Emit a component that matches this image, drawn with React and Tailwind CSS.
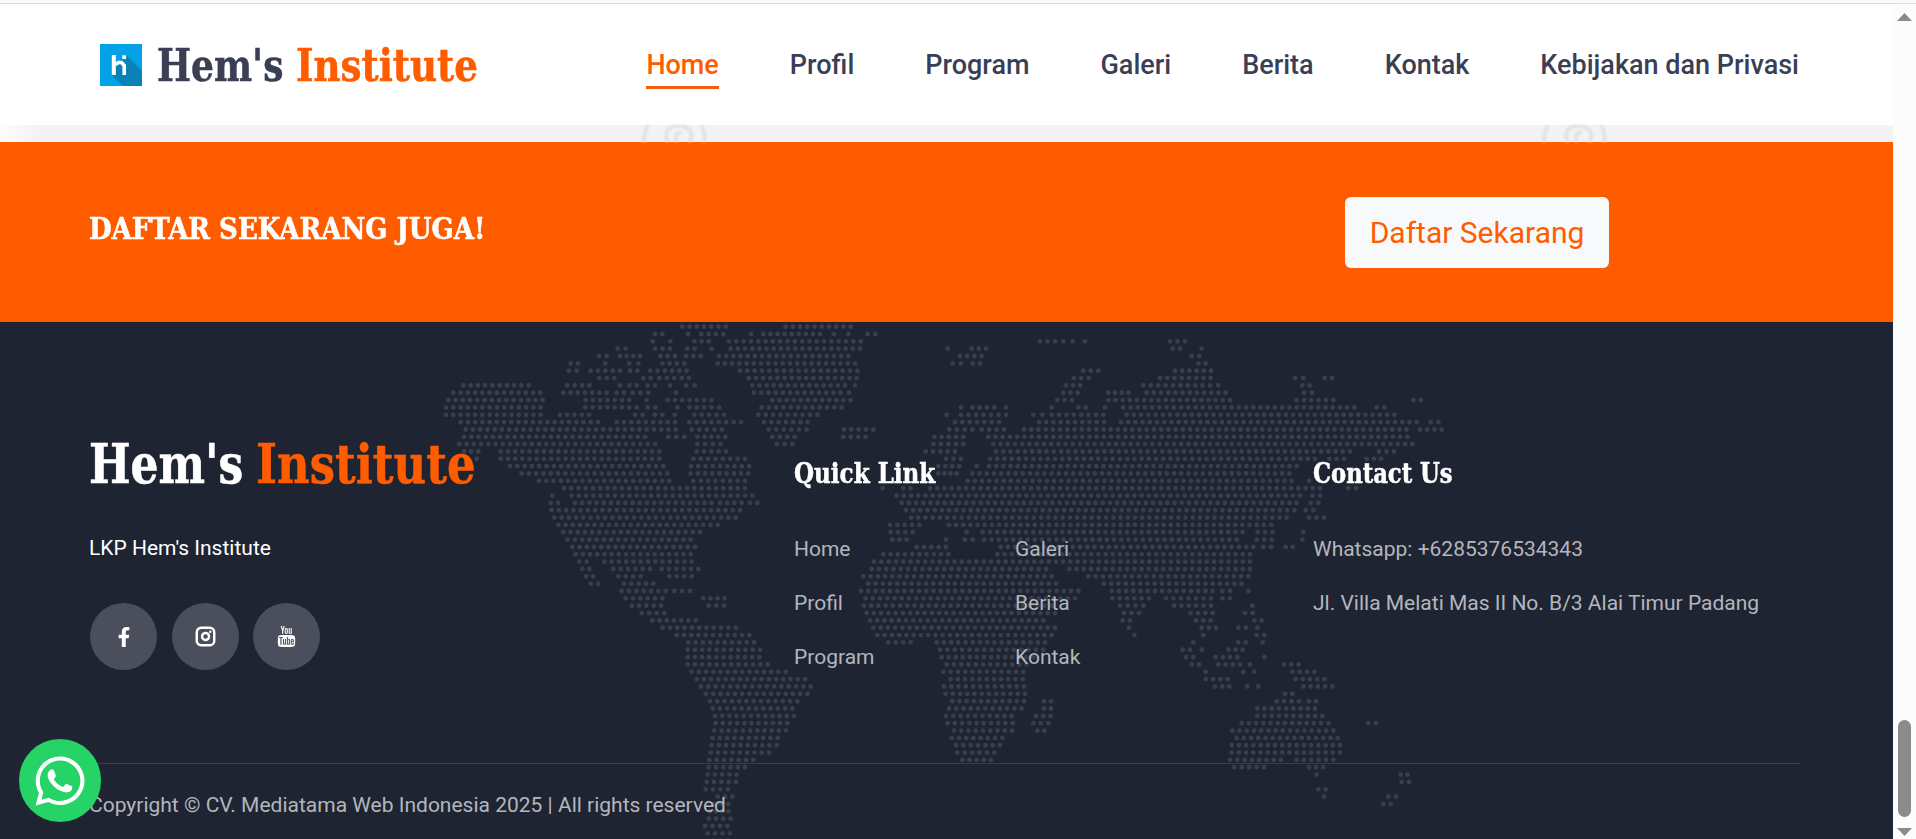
import React from "react";
import { FaWhatsapp, FaFacebookF } from "react-icons/fa";
import { TfiYoutube } from "react-icons/tfi";
import { FiInstagram } from "react-icons/fi";

// Dotted world map: one string per row, "start-end" runs of dots.
const MAP_ROWS = [
  "787-917 1097-1292",
  "705-727 804 844-910 993 1030-1200 1242 1285 1343-1366",
  "698 751 823-866 927-1322 1860-1905 1930-1958 1995 2250-2295",
  "593-617 705-750 802-824 875 932-1320 1583 1655-1698 2258-2280 2345",
  "537-560 600-660 721-765 798-842 897-1285 1620-1685 2315-2338",
  "452-474 556 628-655 727-793 893-1305 1598-1623 1658-1680 2335-2357",
  "447-470 512-600 630-652 691-800 960-1312 1990-2035 2265-2373",
  "538-583 670-692 718-807 986-1310 1962-2006 2220-2372 2625-2650 2714-2736",
  "130-326 442-508 600 628-650 683-705 750 798-824 997-1275 1305 1938-1980 2170-2370 2395 2647-2669",
  "100-361 430-560 590-612 638-685 768 1002-1262 1287 1930-1973 2065-2125 2180-2417 2652-2676",
  "85-368 497-628 680 743-874 1057-1292 1912-1956 2065-2430 2630-2740 2980-3003",
  "78-362 496-650 683-706 772 808-897 1025-1265 1623 1657-1723 1758 1895 1975-1997 2055 2110-2803 2870-2893",
  "78-362 420-507 645-668 705-727 764 823-912 1015-1192 1580 1623-1758 1840-1867 1895-2050 2120-2923",
  "122-534 590-765 808-963 1032-1163 1605-1737 1857-2052 2103-2990 3032-3055",
  "137-767 815-906 1046-1160 1272-1360 1588-1657 1685-1752 1812-2960 3000-3065",
  "132-675 745-793 832-916 1057-1124 1270-1337 1543-1630 1705-2962",
  "118-705 832-902 1070-1117 1540-1630 1720-2847 2868-2977",
  "132-175 242-718 830-918 1517-1605 1728-2790 2877-2922",
  "170 242-718 820-975 1578-1623 1710-2685 2728-2772 2840-2883",
  "270-730 813-987 1555-1618 1670 1707-2630",
  "305-742 812-985 1555-1610 1657-2608",
  "357-748 820-975 1643-2615 2667",
  "432-975 1388 1450-1472 1530-2700 2785-2808",
  "397 455-997 1430-2640 2677-2700",
  "392-414 465-875 900-965 990-1012 1445-2630 2672-2695",
  "395-960 1458-2623 2657-2680",
  "403-947 1473-2600 2667-2712",
  "415-893 1410-1498 1587-2553",
  "430-840 1412-1478 1640 1688-2468 2513-2557 2650",
  "443-812 1417-1460 1578 1635-1658 1693-2450 2510-2555 2647",
  "457-825 1490-1578 1742-2500 2530-2553 2597-2618",
  "467-812 1390-1585 1732-2490",
  "478-500 553-815 1362-1735 1757-2490",
  "487-508 580-690 725-835 1355-1878 1948-2490",
  "498-520 595-662 748-815 1330-1895 2005-2485",
  "512-535 612-700 1345-1908 2052-2465",
  "605-737 763-810 1323-1975 2075-2378 2407-2430 2485",
  "617-727 850-914 1337-1965 2077-2187 2238-2373 2407-2430",
  "635-723 866-912 1332-1895 2100-2170 2262-2373 2497",
  "665-733 1340-1905 2112-2157 2312-2378 2475-2498",
  "697-827 1350-1870 2108-2130 2328-2372 2503-2525",
  "728-947 1360-1905 2127 2345-2388 2455-2478 2512",
  "770-988 1372-1895 2143 2350 2510-2533",
  "805-1002 1405-1472 1550-1875 2320 2455-2477 2528",
  "803-1020 1560-1870 2288-2310 2345 2425-2468",
  "803-1018 1565-1840 2298-2320 2387-2452 2533",
  "803-1043 1580-1820 2315-2337 2395-2460 2490 2592-2636",
  "815-1097 1570-1810 2357 2470 2503 2617-2683",
  "830-1155 1592-1808 2357-2423 2627-2713",
  "843-1172 1572-1812 2385-2428 2482 2515 2650-2737",
  "858-1162 1577-1815 2595-2617",
  "870-1132 1597-1812 1872-1893 2570-2637 2667-2688",
  "878-1117 1587-1805 1872-1893 2512-2685",
  "885-1122 1578-1775 1848-1892 2512-2707",
  "887-1102 1583-1778 1840-1885 2465-2725 2845-2868",
  "883-1098 1602-1776 1852-1873 2437-2740",
  "878-1073 1595-1747 2450-2753",
  "875-1070 1608-1740 2435-2760",
  "872-1047 1612-1723 2435-2760",
  "868-1000 1627-1713 2430-2583 2630-2740",
  "866-975 2443-2532 2667-2710",
  "863-950 2690 2942-2963",
  "860-948 2945-2967",
  "857-923 2695-2717",
  "893-937 2712 2905-2928",
  "880-925 2890-2912",
  "870-925",
  "866-932",
  "855-922",
  "863-930",
  "880-925",
];

const MAP_PATH = MAP_ROWS.map((row, r) =>
  row
    .split(" ")
    .map((run) => {
      const [a, b = a] = run.split("-").map(Number);
      const n = Math.round((b - a) / 21.7);
      const step = n ? (b - a) / n : 0;
      let d = "";
      for (let i = 0; i <= n; i++) d += `M${(a + i * step).toFixed(1)} ${(14 + r * 22.03).toFixed(1)}h0`;
      return d;
    })
    .join("")
).join("");

function WorldMap() {
  return (
    <svg className="absolute left-[420px] top-0 h-[517px] w-[1040px] blur-[0.5px]" viewBox="0 0 3120 1551">
      <path d={MAP_PATH} fill="none" stroke="#393e4d" strokeWidth="14.5" strokeLinecap="round" />
    </svg>
  );
}

function Logo() {
  return (
    <svg className="h-[42px] w-[42px] shrink-0" viewBox="0 0 42 42">
      <rect width="42" height="42" fill="#03a1e5" />
      <path d="M26 11 L42 27 V42 H23 L12 31 L16 20 Z" fill="#0a82b8" />
      <path d="M13.800 11V31" stroke="#fff" strokeWidth="4" />
      <path d="M15.500 20.500L18.500 18.500H21.500L24.200 21.500V31" fill="none" stroke="#fff" strokeWidth="3.600" />
      <rect x="22.300" y="11.300" width="3.800" height="3.800" fill="#fff" />
    </svg>
  );
}

function Swirl() {
  return (
    <svg className="h-[17px] w-[68px] shrink-0 blur-[0.8px]" viewBox="0 0 68 17" fill="none" stroke="#e1e1e4" strokeWidth="3.500">
      <path d="M8 0Q4 8 4 17M61 0Q66 8 64 17M28 17C23 8 28 1 38 1C50 1 55 10 49 17M37 17C34 11 36 7 42 8" />
    </svg>
  );
}

const NAV = ["Home", "Profil", "Program", "Galeri", "Berita", "Kontak", "Kebijakan dan Privasi"];
const SLAB =
  "font-['Roboto_Slab','DejaVu_Serif_Condensed','DejaVu_Serif',serif] font-bold whitespace-nowrap [-webkit-text-stroke:0.5px_currentColor]";
const SOCIAL = "flex h-[67px] w-[67px] items-center justify-center rounded-full bg-[#4b4f5b]";

export default function App() {
  return (
    <div className="flex h-[839px] w-[1916px] flex-col overflow-hidden bg-[#fcfcfc] font-['Roboto',sans-serif]">
      <div className="h-1 shrink-0 border-b border-[#dcdde8] bg-[#f8f8ff]" />
      <div className="flex min-h-0 flex-1">
        <main className="relative flex w-[1893px] shrink-0 flex-col overflow-hidden">
          <header className="flex h-[121px] shrink-0 items-start bg-white pl-[100px] pr-[94px] pt-10">
            <Logo />
            <div className={`${SLAB} ml-[15px] flex h-11 items-center text-[45px] leading-[44px]`}>
              <span className="w-[139px] text-[#3a3f55]"><span className="inline-block origin-left scale-x-[0.89]">Hem's</span></span>
              <span className="w-[182px] text-[#ff5c00]"><span className="inline-block origin-left scale-x-[0.92]">Institute</span></span>
            </div>
            <nav className="ml-auto flex gap-[71px] whitespace-nowrap text-[27px] font-medium leading-8 text-[#3a3f55]">
              {NAV.map((n, i) => (
                <a key={n} className={i === 0 ? "h-[45px] border-b-[3px] border-[#f0600f] pt-[5px] text-[#ff5c00]" : "pt-[5px]"}>{n}</a>
              ))}
            </nav>
          </header>
          <div className="flex h-[17px] shrink-0 bg-linear-to-r from-[#fcfcfd] via-[#f3f3f5] via-[2%] to-[#f3f3f5] pl-[640px]">
            <Swirl />
            <div className="w-[832px]" />
            <Swirl />
          </div>
          <section className="flex h-[180px] shrink-0 items-start justify-between bg-[#ff5c00] pl-[89px] pr-[284px]">
            <h2 className={`${SLAB} mt-[67px] origin-left scale-x-[0.982] text-[29.500px] leading-10 text-white`}>DAFTAR SEKARANG JUGA!</h2>
            <button className="mt-[55px] h-[71px] w-[264px] whitespace-nowrap rounded-md bg-[#f8f9fa] text-[30px] text-[#ff5c00]">Daftar Sekarang</button>
          </section>
          <footer className="relative flex-1 bg-[#1f2433] text-[21px] text-[#b4b6bc]">
            <WorldMap />
            <div className="relative ml-[89px] flex h-[442px] w-[1711px] border-b border-[#393e4b] pt-[110px]">
              <div className="w-[705px]">
                <div className={`${SLAB} flex h-[64px] items-center text-[54px] leading-[64px]`}>
                  <span className="w-[167px] text-white"><span className="inline-block origin-left scale-x-[0.905]">Hem's</span></span>
                  <span className="text-[#ff5c00]"><span className="inline-block origin-left scale-x-[0.925]">Institute</span></span>
                </div>
                <p className="mt-[36px] leading-8 text-white">LKP Hem's Institute</p>
                <div className="ml-px mt-[39px] flex gap-[14.500px] text-white">
                  <a className={SOCIAL}><FaFacebookF size={20} /></a>
                  <a className={SOCIAL}><FiInstagram size={21} strokeWidth={2.800} /></a>
                  <a className={SOCIAL}><TfiYoutube size={21} /></a>
                </div>
              </div>
              <div className="w-[519px] pt-[22px]">
                <h3 className={`${SLAB} origin-left scale-x-[0.915] text-[28px] leading-10 text-white`}>Quick Link</h3>
                <div className="mt-[39px] grid grid-cols-[221px_1fr] gap-y-[22px] leading-8">
                  <a>Home</a><a>Galeri</a><a>Profil</a><a>Berita</a><a>Program</a><a>Kontak</a>
                </div>
              </div>
              <div className="pt-[22px]">
                <h3 className={`${SLAB} origin-left scale-x-[0.9] text-[28px] leading-10 text-white`}>Contact Us</h3>
                <div className="mt-[39px] flex flex-col gap-[22px] whitespace-nowrap leading-8">
                  <p>Whatsapp: +6285376534343</p>
                  <p>Jl. Villa Melati Mas II No. B/3 Alai Timur Padang</p>
                </div>
              </div>
            </div>
            <p className="relative ml-[89px] mt-[25px] leading-8">Copyright © CV. Mediatama Web Indonesia 2025 | All rights reserved</p>
          </footer>
          <a className="absolute left-[19px] top-[735px] flex h-[83px] w-[82px] items-center justify-center rounded-full bg-[#25d366] text-white">
            <FaWhatsapp size={56} />
          </a>
        </main>
        <aside className="flex flex-1 flex-col items-center pt-[9px]">
          <svg width="15" height="8" viewBox="0 0 15 8"><path d="M0 8L7.500 0L15 8Z" fill="#8b8b8b" /></svg>
          <div className="mt-[699px] h-[97px] w-[13px] rounded-full bg-[#8b8b8b]" />
          <svg className="mt-[11px]" width="15" height="8" viewBox="0 0 15 8"><path d="M0 0L7.500 8L15 0Z" fill="#8b8b8b" /></svg>
        </aside>
      </div>
    </div>
  );
}
